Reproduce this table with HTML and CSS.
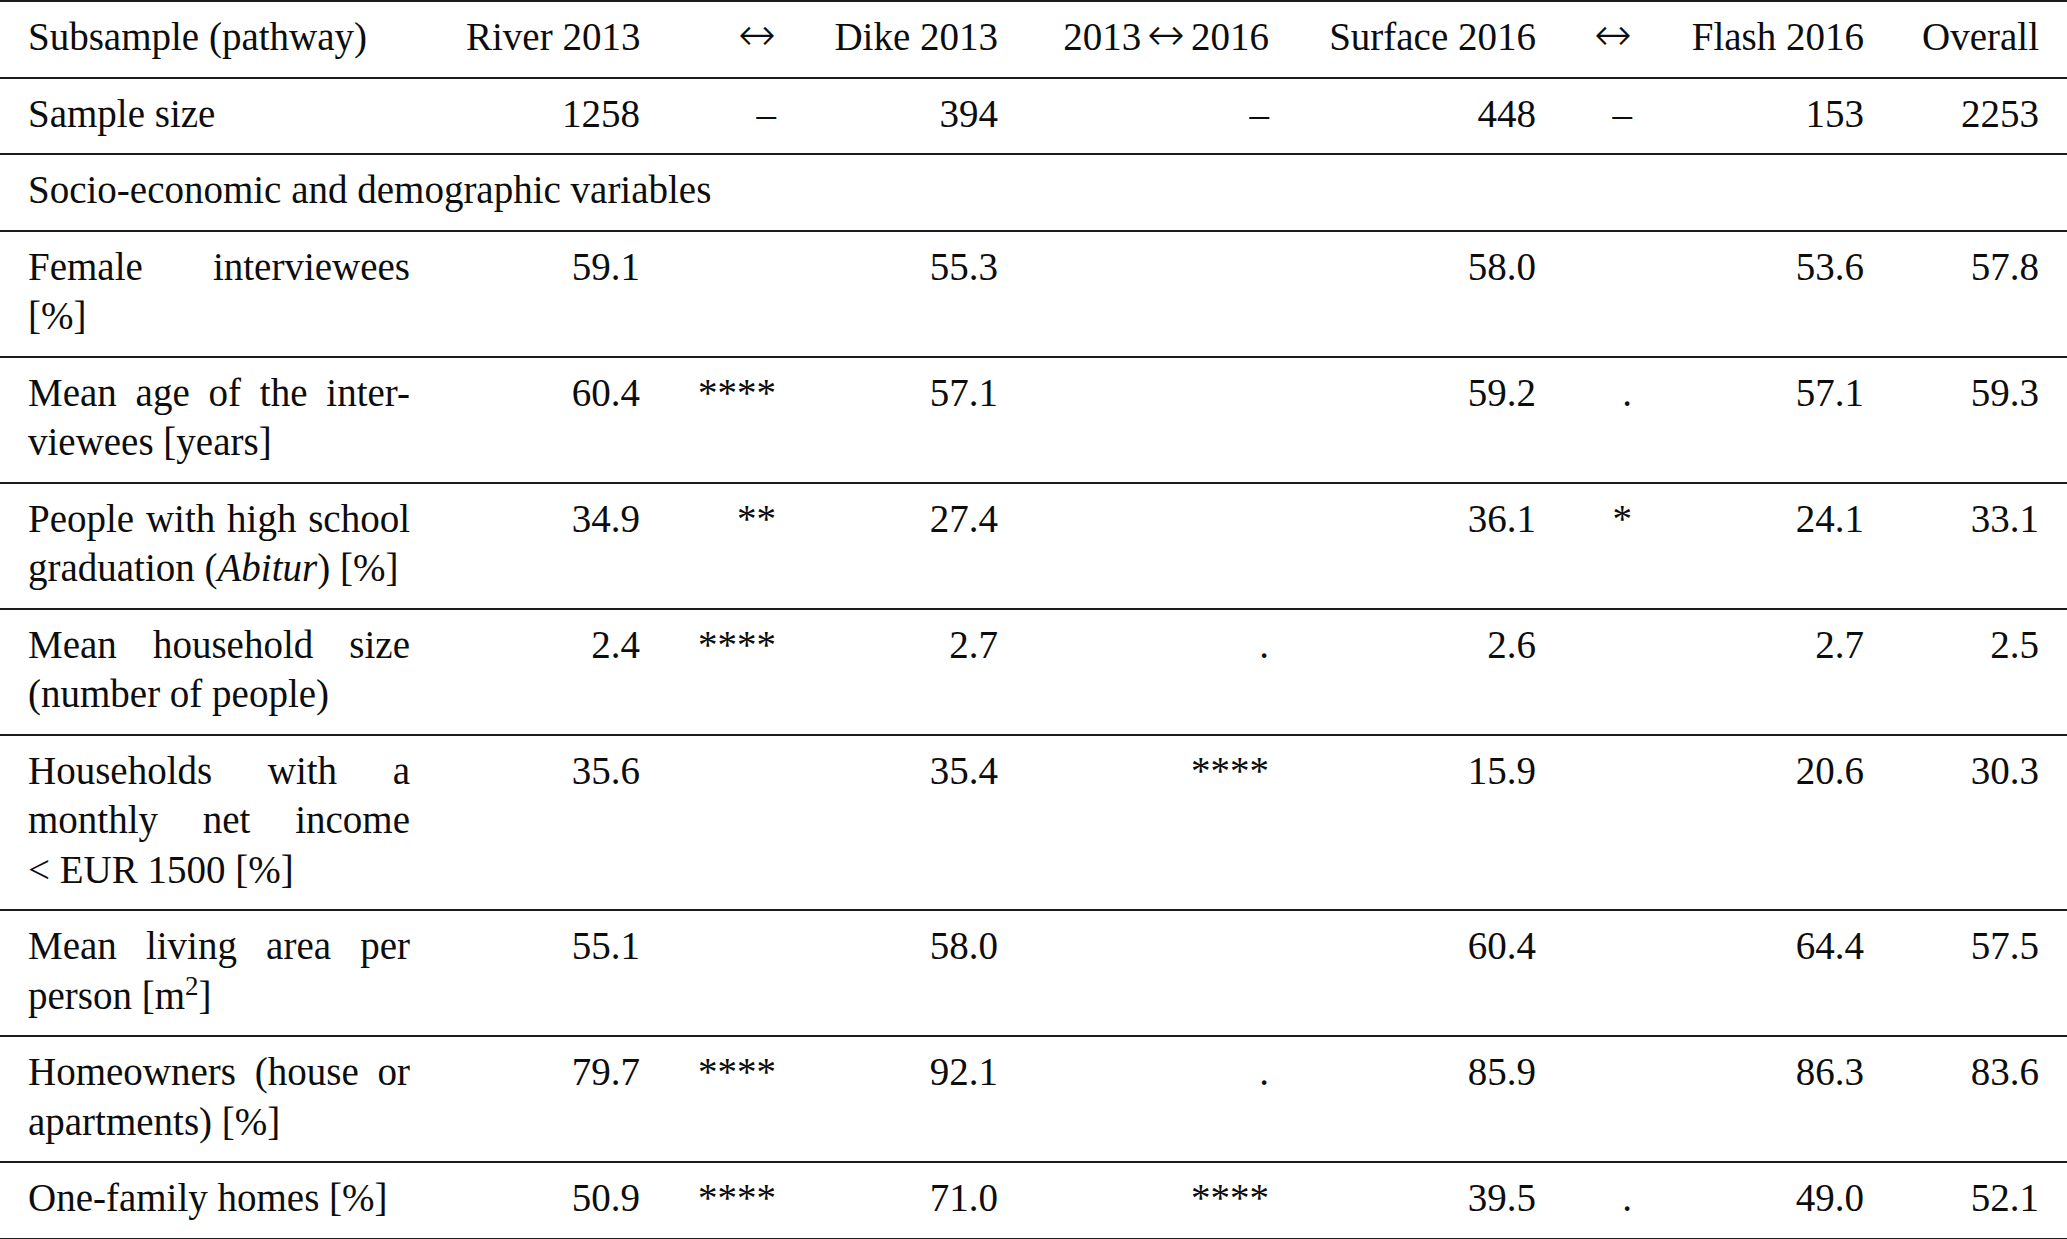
FILE: index.html
```html
<!DOCTYPE html>
<html lang="en">
<head>
<meta charset="utf-8">
<title>Subsample comparison</title>
<link rel="stylesheet" href="styles.css">
</head>
<body>
<table class="tbl">
  <colgroup>
    <col class="c-label">
    <col class="c-river">
    <col class="c-arr1">
    <col class="c-dike">
    <col class="c-arr2">
    <col class="c-surface">
    <col class="c-arr3">
    <col class="c-flash">
    <col class="c-overall">
  </colgroup>
  <thead>
    <tr>
      <th class="label">Subsample (pathway)</th>
      <th>River 2013</th>
      <th><span class="arr">↔</span></th>
      <th>Dike 2013</th>
      <th>2013<span class="arr arr-in">↔</span>2016</th>
      <th>Surface 2016</th>
      <th><span class="arr">↔</span></th>
      <th>Flash 2016</th>
      <th>Overall</th>
    </tr>
  </thead>
  <tbody>
    <tr>
      <td class="label">Sample size</td>
      <td>1258</td><td>–</td><td>394</td><td>–</td><td>448</td><td>–</td><td>153</td><td>2253</td>
    </tr>
    <tr>
      <td class="section" colspan="9">Socio-economic and demographic variables</td>
    </tr>
    <tr>
      <td class="label"><span class="ln">Female interviewees</span><span class="ln">[%]</span></td>
      <td>59.1</td><td></td><td>55.3</td><td></td><td>58.0</td><td></td><td>53.6</td><td>57.8</td>
    </tr>
    <tr>
      <td class="label"><span class="ln">Mean age of the inter-</span><span class="ln">viewees [years]</span></td>
      <td>60.4</td><td>****</td><td>57.1</td><td></td><td>59.2</td><td>.</td><td>57.1</td><td>59.3</td>
    </tr>
    <tr>
      <td class="label"><span class="ln">People with high school</span><span class="ln">graduation (<i>Abitur</i>) [%]</span></td>
      <td>34.9</td><td>**</td><td>27.4</td><td></td><td>36.1</td><td>*</td><td>24.1</td><td>33.1</td>
    </tr>
    <tr>
      <td class="label"><span class="ln">Mean household size</span><span class="ln">(number of people)</span></td>
      <td>2.4</td><td>****</td><td>2.7</td><td>.</td><td>2.6</td><td></td><td>2.7</td><td>2.5</td>
    </tr>
    <tr>
      <td class="label"><span class="ln">Households with a</span><span class="ln">monthly net income</span><span class="ln">&lt;&#8197;EUR 1500 [%]</span></td>
      <td>35.6</td><td></td><td>35.4</td><td>****</td><td>15.9</td><td></td><td>20.6</td><td>30.3</td>
    </tr>
    <tr>
      <td class="label"><span class="ln">Mean living area per</span><span class="ln">person [m<sup class="sup">2</sup>]</span></td>
      <td>55.1</td><td></td><td>58.0</td><td></td><td>60.4</td><td></td><td>64.4</td><td>57.5</td>
    </tr>
    <tr>
      <td class="label"><span class="ln">Homeowners (house or</span><span class="ln">apartments) [%]</span></td>
      <td>79.7</td><td>****</td><td>92.1</td><td>.</td><td>85.9</td><td></td><td>86.3</td><td>83.6</td>
    </tr>
    <tr>
      <td class="label">One-family homes [%]</td>
      <td>50.9</td><td>****</td><td>71.0</td><td>****</td><td>39.5</td><td>.</td><td>49.0</td><td>52.1</td>
    </tr>
  </tbody>
</table>
</body>
</html>
```

FILE: styles.css
```css
html, body {
  margin: 0;
  padding: 0;
  background: #ffffff;
}

body {
  font-family: "Liberation Serif", "Times New Roman", "DejaVu Serif", serif;
  font-size: 39px;
  color: #0d0d0d;
}

.tbl {
  width: 2067px;
  table-layout: fixed;
  border-collapse: collapse;
  border-top: 2px solid #1c1c1c;
  border-bottom: 2px solid #1c1c1c;
}

.c-label   { width: 438px; }
.c-river   { width: 230px; }
.c-arr1    { width: 136px; }
.c-dike    { width: 222px; }
.c-arr2    { width: 271px; }
.c-surface { width: 267px; }
.c-arr3    { width: 96px; }
.c-flash   { width: 232px; }
.c-overall { width: 175px; }

.tbl th,
.tbl td {
  font-weight: normal;
  line-height: 49.5px;
  padding: 10px 28px 15px 28px;
  text-align: right;
  vertical-align: top;
  white-space: nowrap;
}

.tbl tr {
  border-top: 2px solid #1c1c1c;
}

.tbl thead tr {
  border-top: none;
}

.tbl .label,
.tbl .section {
  text-align: left;
  white-space: normal;
}

.ln {
  display: block;
  text-align: justify;
}

.ln:not(:last-child) {
  text-align-last: justify;
}

.arr {
  font-family: "DejaVu Sans", sans-serif;
  font-size: 45px;
  line-height: 0;
  font-weight: 200;
}

.arr-in {
  margin: 0 6px;
}

.sup {
  font-size: 27px;
  line-height: 0;
  vertical-align: 14px;
}
```
